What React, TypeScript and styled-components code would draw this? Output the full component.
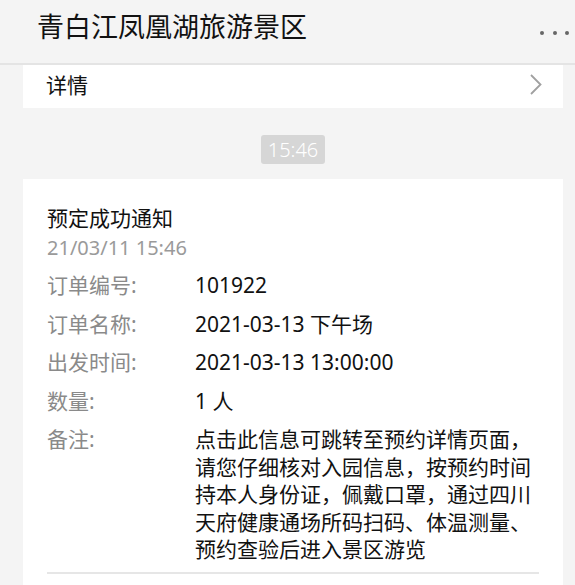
import React from 'react';
import styled, { createGlobalStyle } from 'styled-components';

const GlobalStyle = createGlobalStyle`
  body {
    margin: 0;
    background: #f4f4f4;
    font-family: 'Noto Sans', 'Noto Sans CJK SC', sans-serif;
    overflow: hidden;
  }
`;

const Header = styled.div`
  height: 65px;
  display: flex;
  align-items: flex-start;
  padding: 9px 6px 0 37px;
  box-sizing: border-box;
  border-bottom: 2px solid #e4e4e4;
`;

const Title = styled.h1`
  margin: 0;
  font-size: 27px;
  font-weight: 400;
  line-height: 36px;
  color: #111;
`;

const Dots = styled.div`
  margin-left: auto;
  margin-top: 22px;
  display: flex;
  gap: 8.5px;

  span {
    width: 4px;
    height: 4px;
    border-radius: 50%;
    background: #666;
  }
`;

const Content = styled.div`
  padding: 0 12px 0 23px;
`;

const LinkCard = styled.div`
  height: 43px;
  box-sizing: border-box;
  background: #fff;
  display: flex;
  align-items: center;
  padding: 0 21px 5px 23px;
  font-size: 21px;
  color: #111;
`;

const Chevron = styled.svg`
  margin-left: auto;
`;

const TimeRow = styled.div`
  display: flex;
  justify-content: center;
  margin: 27px 0 15px;
`;

const TimeBadge = styled.div`
  height: 29px;
  line-height: 29px;
  padding: 0 7px;
  background: #d6d6d6;
  border-radius: 3px;
  color: #fff;
  font-size: 20px;
  font-weight: 300;
`;

const Card = styled.div`
  background: #fff;
  padding: 25px 24px 11px 24px;
`;

const CardTitle = styled.div`
  font-size: 21px;
  line-height: 29px;
  color: #111;
`;

const CardDate = styled.div`
  font-size: 20px;
  line-height: 29px;
  color: #9a9a9a;
  margin-bottom: 10px;
`;

const Row = styled.div`
  display: flex;
  font-size: 21px;
  line-height: 27.5px;
  margin-bottom: 11px;
`;

const Label = styled.div`
  width: 148px;
  flex-shrink: 0;
  color: #8a8a8a;
`;

const Value = styled.div`
  color: #111;
  flex: 1;
`;

const Divider = styled.div`
  height: 2px;
  background: #e6e6e6;
  margin-top: -3px;
`;

const rows: [string, string][] = [
  ['订单编号:', '101922'],
  ['订单名称:', '2021-03-13 下午场'],
  ['出发时间:', '2021-03-13 13:00:00'],
  ['数量:', '1 人'],
  [
    '备注:',
    '点击此信息可跳转至预约详情页面，请您仔细核对入园信息，按预约时间持本人身份证，佩戴口罩，通过四川天府健康通场所码扫码、体温测量、预约查验后进入景区游览',
  ],
];

const App: React.FC = () => {
  return (
    <>
      <GlobalStyle />
      <Header>
        <Title>青白江凤凰湖旅游景区</Title>
        <Dots>
          <span />
          <span />
          <span />
        </Dots>
      </Header>
      <Content>
        <LinkCard>
          详情
          <Chevron width="12" height="21" viewBox="0 0 12 21">
            <polyline points="1,1 10.5,10.5 1,20" fill="none" stroke="#a0a0a0" strokeWidth="1.8" />
          </Chevron>
        </LinkCard>
        <TimeRow>
          <TimeBadge>15:46</TimeBadge>
        </TimeRow>
        <Card>
          <CardTitle>预定成功通知</CardTitle>
          <CardDate>21/03/11 15:46</CardDate>
          {rows.map(([label, value]) => (
            <Row key={label}>
              <Label>{label}</Label>
              <Value>{value}</Value>
            </Row>
          ))}
          <Divider />
        </Card>
      </Content>
    </>
  );
};

export default App;
